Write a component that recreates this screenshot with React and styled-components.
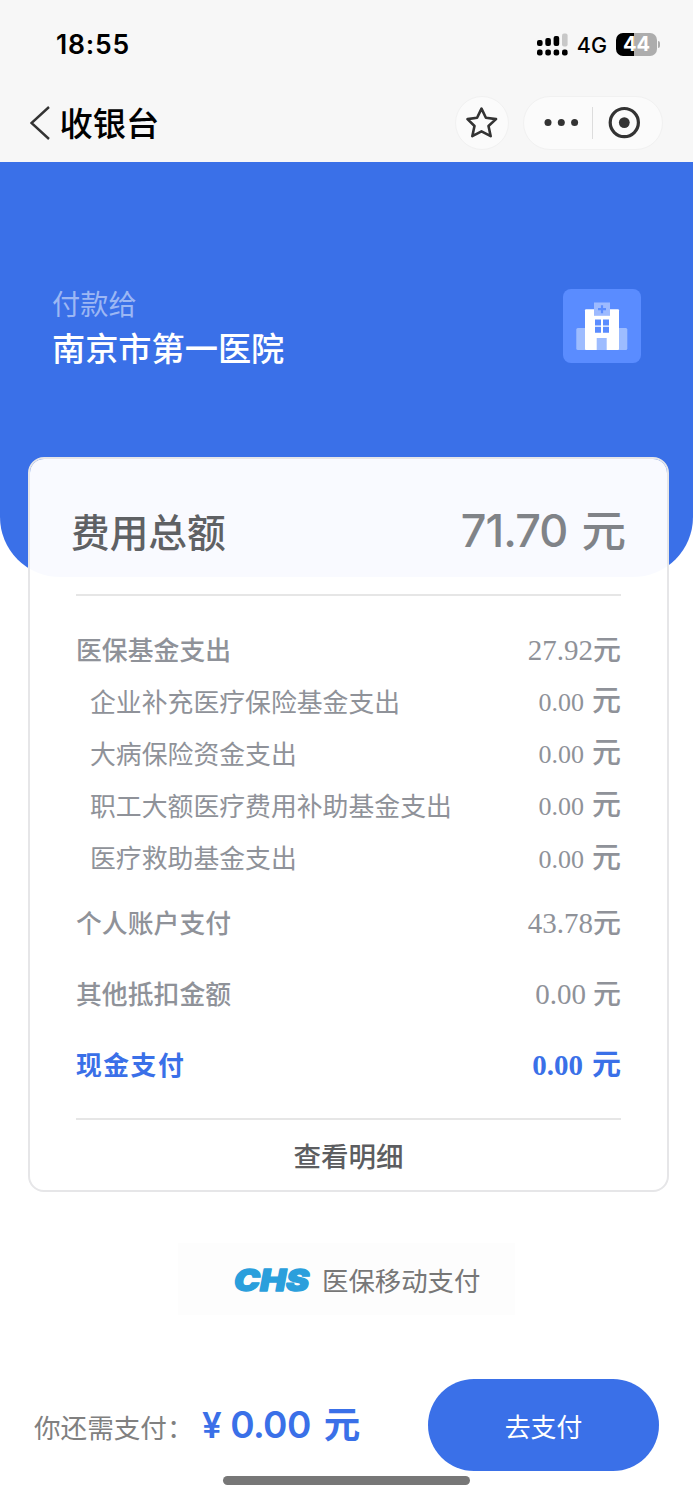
import React from 'react';
import styled, { createGlobalStyle } from 'styled-components';

const cjk = '"Noto Sans CJK SC", sans-serif';
const blue = '#3a70e8';

const GlobalStyle = createGlobalStyle`
  * { box-sizing: border-box; }
  body { margin: 0; background: #fff; font-family: ${cjk}; }
`;

const Screen = styled.div`
  width: 693px;
  height: 1499px;
  display: flex;
  flex-direction: column;
  background: #fff;
  overflow: hidden;
  white-space: nowrap;
`;

const StatusBar = styled.div`
  height: 84px;
  padding: 4px 33px 0 56px;
  display: flex;
  align-items: center;
  justify-content: space-between;
  background: #f7f7f7;
  color: #000;
  font-family: Inter, sans-serif;
`;

const Clock = styled.span`
  font-size: 26.5px;
  font-weight: 600;
  letter-spacing: 0.8px;
`;

const StatusRight = styled.div`
  display: flex;
  align-items: center;
`;

const Network = styled.span`
  margin: 2px 9px 0 9px;
  font-size: 21.5px;
  font-weight: 500;
`;

const Battery = styled.div`
  width: 41px;
  height: 23px;
  border-radius: 7px;
  background: linear-gradient(90deg, #000 0 18px, #adadad 18px);
  color: #fff;
  font-size: 20px;
  font-weight: 700;
  line-height: 23px;
  text-align: center;
`;

const BatteryCap = styled.div`
  width: 2px;
  height: 7px;
  margin-left: 1px;
  border-radius: 0 3px 3px 0;
  background: #adadad;
`;

const NavBar = styled.div`
  height: 78px;
  padding: 0 30px 0 30px;
  display: flex;
  align-items: center;
  background: #f7f7f7;
`;

const NavTitle = styled.h1`
  flex: 1;
  margin: -2px 0 0 8.5px;
  font-size: 33.3px;
  line-height: 48px;
  font-weight: 500;
  color: #000;
`;

const RoundButton = styled.div`
  width: 54px;
  height: 54px;
  border: 1px solid #f1f1f1;
  border-radius: 50%;
  background: #fbfbfb;
  display: flex;
  align-items: center;
  justify-content: center;
`;

const Capsule = styled.div`
  width: 140px;
  height: 54px;
  margin-left: 14px;
  border: 1px solid #f1f1f1;
  border-radius: 27px;
  background: #fbfbfb;
  display: flex;
  align-items: center;
`;

const Hero = styled.div`
  height: 415px;
  padding: 121px 52px 0;
  border-radius: 0 0 60px 60px;
  background: ${blue};
  display: flex;
  align-items: flex-start;
  justify-content: space-between;
`;

const PayeeLabel = styled.div`
  font-size: 28.2px;
  line-height: 40px;
  color: #9cb7f4;
`;

const PayeeName = styled.div`
  font-size: 33.2px;
  line-height: 48px;
  font-weight: 500;
  color: #fff;
`;

const HospitalTile = styled.div`
  width: 78px;
  height: 74px;
  margin-top: 6px;
  border-radius: 8px;
  background: #5a8cff;
`;

const Card = styled.section`
  width: 641px;
  height: 735px;
  margin: -120px 0 0 28px;
  padding: 0 46px;
  border: 2px solid #e6e6e8;
  border-radius: 16px;
  background: rgba(255, 255, 255, 0.97);
  background-clip: padding-box;
  display: flex;
  flex-direction: column;
`;

const TotalRow = styled.div`
  height: 135px;
  flex: none;
  padding-top: 7px;
  margin: 0 -5px 0 -5px;
  display: flex;
  align-items: center;
  justify-content: space-between;
`;

const TotalLabel = styled.h2`
  margin: 0;
  font-size: 38.7px;
  line-height: 56px;
  font-weight: 500;
  color: #5f6164;
`;

const TotalAmount = styled.div`
  margin-top: -1px;
  font-family: Inter, ${cjk};
  font-size: 45px;
  line-height: 56px;
  font-weight: 500;
  letter-spacing: -0.9px;
  color: #808388;
`;

const Rule = styled.div`
  height: 2px;
  flex: none;
  background: #e6e6e6;
`;

const Rows = styled.div`
  height: 522px;
  flex: none;
  padding-top: 27px;
`;

const Row = styled.div`
  height: ${(p) => p.$height || 52}px;
  padding-left: ${(p) => (p.$sub ? 14 : 0)}px;
  display: flex;
  align-items: flex-start;
  justify-content: space-between;
  color: ${(p) => (p.$accent ? blue : '#8f9299')};
  line-height: 52px;
`;

const RowLabel = styled.span`
  font-size: 25.8px;
  font-weight: ${(p) => p.$weight || 400};
  letter-spacing: ${(p) => (p.$weight === 700 ? 1.5 : 0.05)}px;
`;

const RowAmount = styled.span`
  margin-top: ${(p) => p.$shift}px;
  font-family: "Liberation Serif", ${cjk};
  font-size: ${(p) => p.$size || 29}px;
  font-weight: ${(p) => (p.$bold ? 700 : 400)};
`;

const Unit = styled.span`
  margin-left: ${(p) => p.$gap || 0}px;
  font-family: ${cjk};
  font-size: ${(p) => p.$size || 28}px;
  font-weight: ${(p) => p.$weight || 500};
  letter-spacing: 0;
`;

const DetailLink = styled.div`
  height: 70px;
  flex: none;
  text-align: center;
  font-size: 27.5px;
  font-weight: 500;
  line-height: 70px;
  color: #5c5d60;
`;

const Brand = styled.div`
  width: 337px;
  height: 72px;
  margin: 51px 0 0 178px;
  padding: 2px 0 0 50px;
  background: #fdfdfd;
  display: flex;
  align-items: center;
`;

const BrandText = styled.span`
  margin-left: 4px;
  font-size: 26.4px;
  line-height: 38px;
  color: #777;
`;

const PayBar = styled.footer`
  height: 92px;
  margin-top: 64px;
  padding: 0 34px;
  display: flex;
  align-items: center;
`;

const DueLabel = styled.span`
  width: 168px;
  padding-top: 4px;
  font-size: 26.6px;
  line-height: 40px;
  color: #808080;
`;

const DueAmount = styled.span`
  flex: 1;
  margin-top: -2px;
  font-family: Inter, ${cjk};
  font-size: 37px;
  line-height: 50px;
  font-weight: 600;
  letter-spacing: -0.6px;
  color: ${blue};
`;

const Yen = styled.span`
  margin-right: 9px;
  font-size: 35px;
`;

const PayButton = styled.button`
  width: 231px;
  height: 92px;
  padding: 0;
  border: 0;
  border-radius: 46px;
  background: ${blue};
  color: #fff;
  font-family: ${cjk};
  font-size: 25.8px;
`;

const HomeIndicator = styled.div`
  width: 247px;
  height: 9px;
  margin: 5px 0 0 223px;
  border-radius: 5px;
  background: #777;
`;

const bars = [
  [0, 7, 6],
  [8.3, 5, 8],
  [16.6, 3, 10],
];

const Signal = () => (
  <svg width="31" height="23" viewBox="0 0 31 23">
    {bars.map(([x, y, h]) => (
      <rect key={x} x={x} y={y} width="5.6" height={h} rx="2" />
    ))}
    <rect x="25" y="0.5" width="5.6" height="13" rx="2" fill="#c8c8c8" />
    {[0, 8.3, 16.6, 25].map((x) => (
      <rect key={x} x={x} y="16.5" width="5.6" height="6" rx="2.2" />
    ))}
  </svg>
);

const Back = () => (
  <svg width="21" height="34" viewBox="0 0 21 34" fill="none" stroke="#333" strokeWidth="2.4">
    <path d="M19 1 L1.5 17 L19 33" />
  </svg>
);

const Star = () => (
  <svg width="32" height="32" viewBox="0 0 32 32" fill="none" stroke="#333" strokeWidth="2.6" strokeLinejoin="round">
    <path d="M15.5 1.6 L19.9 10.8 L30 12.1 L22.5 19 L24.7 29.2 L15.5 24.4 L6.3 29.2 L8.5 19 L1.5 12.1 L11.1 10.8 Z" />
  </svg>
);

const CapsuleIcons = () => (
  <svg width="138" height="52" viewBox="0 0 138 52" fill="#333">
    <circle cx="24" cy="25.6" r="3.5" />
    <circle cx="37.3" cy="25.6" r="3.5" />
    <circle cx="50.6" cy="25.6" r="3.5" />
    <rect x="68" y="10" width="1" height="32" fill="#ddd" />
    <circle cx="100.3" cy="25.6" r="14.1" fill="none" stroke="#333" strokeWidth="3.2" />
    <circle cx="100.3" cy="25.6" r="5.4" />
  </svg>
);

const Hospital = () => (
  <svg width="78" height="74" viewBox="0 0 78 74" display="block">
    <rect x="13.3" y="39" width="51" height="22" rx="1.5" fill="#9dbcff" />
    <rect x="22" y="20.2" width="34" height="40.8" rx="1" fill="#fff" />
    <rect x="31" y="13.5" width="16" height="13.3" fill="#9dbaff" />
    <path d="M39 16.2v8M35 20.2h8" stroke="#5a8cff" strokeWidth="2.2" />
    <path d="M32 30.5h6v6h-6zM40 30.5h6v6h-6zM32 37.7h6v6h-6zM40 37.7h6v6h-6z" fill="#5a8cff" />
    <rect x="33.7" y="49" width="10" height="12" fill="#9dbcff" />
  </svg>
);

const ChsLogo = () => (
  <svg width="90" height="38" viewBox="0 0 90 38">
    <text
      x="6"
      y="30"
      textLength="75"
      lengthAdjust="spacingAndGlyphs"
      fontFamily="Inter, sans-serif"
      fontSize="30"
      fontWeight="900"
      fontStyle="italic"
      fill="#2a9fdc"
      stroke="#2a9fdc"
      strokeWidth="1.4"
      strokeLinejoin="round"
    >
      CHS
    </text>
  </svg>
);

const items = [
  { label: '医保基金支出', amount: '27.92', weight: 500, shift: -1 },
  { label: '企业补充医疗保险基金支出', amount: '0.00', sub: true, shift: -3 },
  { label: '大病保险资金支出', amount: '0.00', sub: true, shift: -3 },
  { label: '职工大额医疗费用补助基金支出', amount: '0.00', sub: true, shift: -3 },
  { label: '医疗救助基金支出', amount: '0.00', sub: true, height: 65, shift: -2 },
  { label: '个人账户支付', amount: '43.78', height: 71, weight: 500, shift: -1 },
  { label: '其他抵扣金额', amount: '0.00', height: 71, weight: 500, gap: 7, shift: -1 },
  { label: '现金支付', amount: '0.00', accent: true, weight: 700, gap: 9, shift: -2 },
];

export default function App() {
  return (
    <>
      <GlobalStyle />
      <Screen>
        <StatusBar>
          <Clock>18:55</Clock>
          <StatusRight>
            <Signal />
            <Network>4G</Network>
            <Battery>44</Battery>
            <BatteryCap />
          </StatusRight>
        </StatusBar>
        <NavBar>
          <Back />
          <NavTitle>收银台</NavTitle>
          <RoundButton><Star /></RoundButton>
          <Capsule><CapsuleIcons /></Capsule>
        </NavBar>
        <Hero>
          <div>
            <PayeeLabel>付款给</PayeeLabel>
            <PayeeName>南京市第一医院</PayeeName>
          </div>
          <HospitalTile><Hospital /></HospitalTile>
        </Hero>
        <Card>
          <TotalRow>
            <TotalLabel>费用总额</TotalLabel>
            <TotalAmount>71.70<Unit $gap={14} $size={44.5}>元</Unit></TotalAmount>
          </TotalRow>
          <Rule />
          <Rows>
            {items.map((it) => (
              <Row key={it.label} $height={it.height} $sub={it.sub} $accent={it.accent}>
                <RowLabel $weight={it.weight}>{it.label}</RowLabel>
                <RowAmount $size={it.sub ? 26 : 29} $bold={it.accent} $shift={it.shift}>
                  {it.amount}
                  <Unit
                    $gap={it.sub ? 8 : it.gap}
                    $size={it.sub || it.accent ? 29 : 28}
                    $weight={it.accent ? 700 : 500}
                  >
                    元
                  </Unit>
                </RowAmount>
              </Row>
            ))}
          </Rows>
          <Rule />
          <DetailLink>查看明细</DetailLink>
        </Card>
        <Brand>
          <ChsLogo />
          <BrandText>医保移动支付</BrandText>
        </Brand>
        <PayBar>
          <DueLabel>你还需支付：</DueLabel>
          <DueAmount><Yen>¥</Yen>0.00<Unit $gap={13} $size={36.5} $weight={700}>元</Unit></DueAmount>
          <PayButton>去支付</PayButton>
        </PayBar>
        <HomeIndicator />
      </Screen>
    </>
  );
}
